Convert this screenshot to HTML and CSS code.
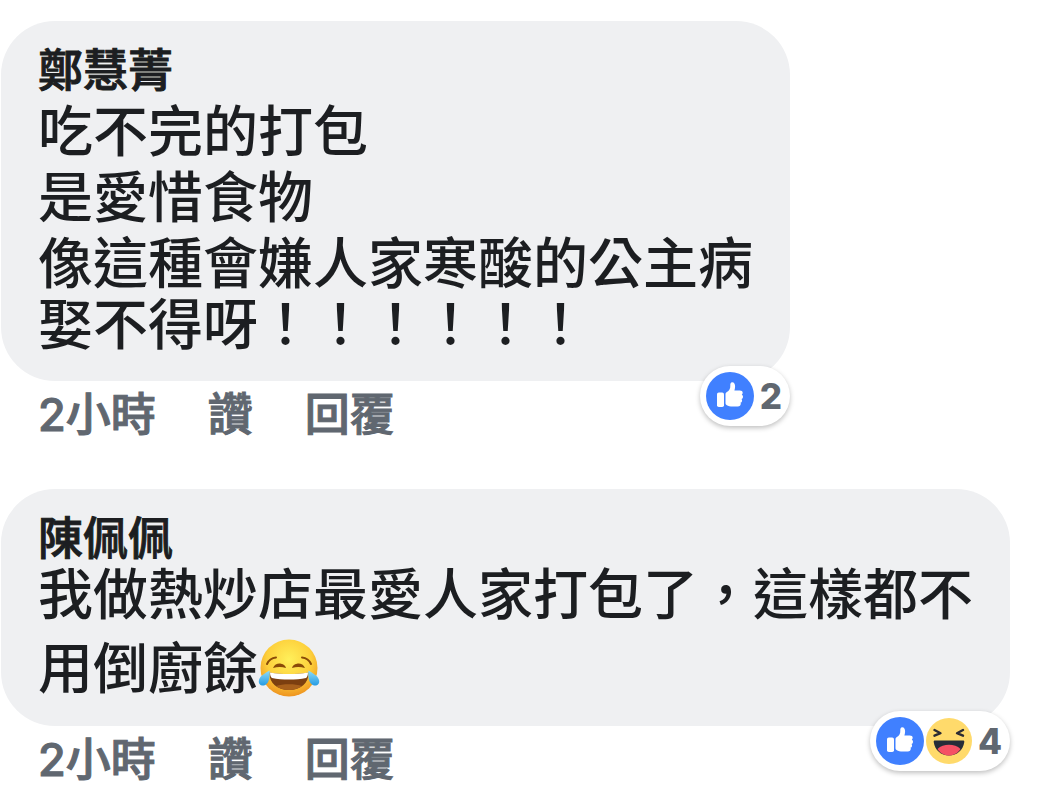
FILE: index.html
```html
<!DOCTYPE html>
<html lang="zh-Hant">
<head>
    <meta charset="UTF-8">
    <meta name="viewport" content="width=device-width, initial-scale=1.0">
    <title>留言</title>
    <link rel="stylesheet" href="styles.css">
</head>
<body>
<svg class="sprite" aria-hidden="true">
    <symbol id="icon-like" viewBox="0 0 48 48">
        <circle cx="24" cy="24" r="24" fill="#4080ff"/>
        <rect x="11" y="20.500" width="7" height="14.500" rx="1.800" fill="#fff"/>
        <path fill="#fff" d="M19.500 22.500c0-1.200.4-1.800 1.400-2.400 2.200-1.400 3.600-3.400 3.400-6.400-.1-2.200.4-3.400 1.900-3.400 2 0 2.900 1.800 2.900 4 0 1.700-.3 3-.7 4.200h5.400c1.700 0 2.900.9 2.900 2.300 0 .8-.3 1.400-.9 1.900.8.400 1.200 1.100 1.200 2 0 1.100-.6 1.900-1.500 2.200.4.400.6.900.6 1.500 0 1.100-.6 1.900-1.600 2.200.2.300.3.600.3 1 0 1.800-1.200 2.900-3 2.900h-5.200c-2.300 0-4.200-.6-6.100-1.600-.7-.4-1-.9-1-1.700z"/>
    </symbol>
    <symbol id="icon-haha" viewBox="0 0 46 46">
        <circle cx="23" cy="23" r="23" fill="#ffda6b"/>
        <path fill="none" stroke="#2b2b33" stroke-width="2.400" stroke-linecap="round" stroke-linejoin="round" d="M8.500 12l6 3.200-6 2.500M37 12l-6 3.200 6 2.500"/>
        <path fill="#262c38" d="M9 22.500h28c1 0 1.500.6 1.300 1.600C37 32.500 31 37.500 23 37.500S9 32.500 7.700 24.100c-.2-1 .3-1.600 1.300-1.600z"/>
        <path fill="#f55064" d="M11.500 31c3-2.800 7-4.200 11.500-4.200s8.500 1.400 11.500 4.200c-2.700 4.200-6.700 6.500-11.500 6.500S14.200 35.200 11.500 31z"/>
    </symbol>
</svg>

<main class="comments">
    <article class="comment">
        <div class="bubble">
            <a class="author spaced" href="#">鄭慧菁</a>
            <p class="text">
                <span class="line">吃不完的打包</span>
                <span class="line">是愛惜食物</span>
                <span class="line">像這種會嫌人家寒酸的公主病</span>
                <span class="line tight">娶不得呀！！！！！！</span>
            </p>
            <button class="reactions" type="button">
                <svg class="like" role="img" aria-label="讚"><use href="#icon-like"/></svg>
                <span class="count">2</span>
            </button>
        </div>
        <div class="actions">
            <a href="#">2小時</a>
            <button type="button">讚</button>
            <button type="button">回覆</button>
        </div>
    </article>

    <article class="comment">
        <div class="bubble short">
            <a class="author" href="#">陳佩佩</a>
            <p class="text">
                <span class="line">我做熱炒店最愛人家打包了，這樣都不</span>
                <span class="line tall">用倒廚餘<svg class="emoji" viewBox="0 0 62 60" role="img" aria-label="笑到流淚">
                    <defs>
                        <radialGradient id="face" cx="50%" cy="35%" r="65%">
                            <stop offset="0" stop-color="#fff05a"/>
                            <stop offset=".6" stop-color="#fdd03c"/>
                            <stop offset="1" stop-color="#ee9420"/>
                        </radialGradient>
                        <linearGradient id="tear" x1="0" y1="0" x2="0" y2="1">
                            <stop offset="0" stop-color="#8fdcf8"/>
                            <stop offset="1" stop-color="#259be3"/>
                        </linearGradient>
                    </defs>
                    <circle cx="31" cy="30" r="28.500" fill="url(#face)"/>
                    <path fill="none" stroke="#8a4b08" stroke-width="2" stroke-linecap="round" d="M9 26c1.500-3.500 5-6.200 9-6.600M53 26c-1.500-3.500-5-6.200-9-6.600"/>
                    <path fill="#8a4b08" d="M15 30c1.500-3.500 4.500-4.800 8-4.300 2.800.4 4.500 2 5 4.300-4-1.200-8.500-1.200-13 0zM47 30c-1.500-3.500-4.500-4.800-8-4.300-2.800.4-4.500 2-5 4.300 4-1.200 8.500-1.200 13 0z"/>
                    <path fill="#7c3f10" d="M11.500 34.500c12 2 27 2 39 0C51 45 42.500 52 31 52S11 45 11.500 34.500z"/>
                    <path fill="#fff" d="M12 34.500c12 2 26 2 38 0 0 3-.8 4.500-2 5.500-10 2-24 2-34 0-1.200-1-2-2.500-2-5.500z"/>
                    <path fill="#a8601c" d="M18 48c7-2.500 19-2.500 26 0-3.500 2.700-8 4-13 4s-9.500-1.300-13-4z"/>
                    <path fill="url(#tear)" d="M11.500 32.500c.8 6-.5 14-5.500 15-3.500.5-6-2-5-5.500 1.200-4.500 6-6.500 10.500-9.500zM50.500 32.500c-.8 6 .5 14 5.500 15 3.500.5 6-2 5-5.500-1.200-4.500-6-6.500-10.500-9.500z"/>
                </svg></span>
            </p>
            <button class="reactions" type="button">
                <svg class="like" role="img" aria-label="讚"><use href="#icon-like"/></svg>
                <svg class="haha" role="img" aria-label="哈"><use href="#icon-haha"/></svg>
                <span class="count">4</span>
            </button>
        </div>
        <div class="actions">
            <a href="#">2小時</a>
            <button type="button">讚</button>
            <button type="button">回覆</button>
        </div>
    </article>
</main>
</body>
</html>
```

FILE: styles.css
```css
* {
    box-sizing: border-box;
}
body {
    margin: 0;
    background: #fff;
    color: #1c1e21;
    font-family: Inter, "Noto Sans CJK TC", sans-serif;
    font-weight: 500;
}
a {
    color: inherit;
    text-decoration: none;
}
button {
    padding: 0;
    border: 0;
    background: none;
    color: inherit;
    font: inherit;
    cursor: pointer;
}
.sprite {
    display: none;
}
.comments {
    padding: 21px 1px 0;
}
.comment {
    margin-bottom: 40px;
}
.comment:last-child {
    margin-bottom: 0;
}
.bubble {
    position: relative;
    width: fit-content;
    padding: 28px 37px 29px;
    border-radius: 54px;
    background: #eff0f2;
}
.bubble.short {
    padding-bottom: 17px;
}
.author {
    display: block;
    font-size: 45px;
    line-height: 44px;
}
.author.spaced {
    margin-bottom: 5px;
}
/* semi-bold look, between the medium and bold cuts */
.author,
.actions {
    -webkit-text-stroke: 1px currentColor;
}
.text {
    margin: 0;
    font-size: 55px;
}
.line {
    display: block;
    line-height: 66px;
    white-space: nowrap;
}
.line.tight {
    line-height: 56px;
}
.line.tall {
    display: flex;
    align-items: center;
    line-height: 82px;
}
.emoji {
    width: 62px;
    height: 60px;
}

/* reaction pill hanging off the bubble's lower right corner */
.reactions {
    position: absolute;
    right: 0;
    bottom: -45px;
    display: flex;
    align-items: center;
    height: 60px;
    padding: 0 8px 0 6px;
    border-radius: 30px;
    background: #fff;
    box-shadow: 0 2px 5px rgba(0, 0, 0, 0.25);
    color: #606770;
}
.like {
    width: 48px;
    height: 48px;
}
.haha {
    width: 46px;
    height: 46px;
    margin-left: 2px;
}
.count {
    margin-left: 6px;
    font-size: 35px;
    font-weight: 800;
}
.actions {
    display: flex;
    gap: 52px;
    padding-left: 37px;
    color: #606770;
    font-size: 45px;
    line-height: 68px;
}
```
